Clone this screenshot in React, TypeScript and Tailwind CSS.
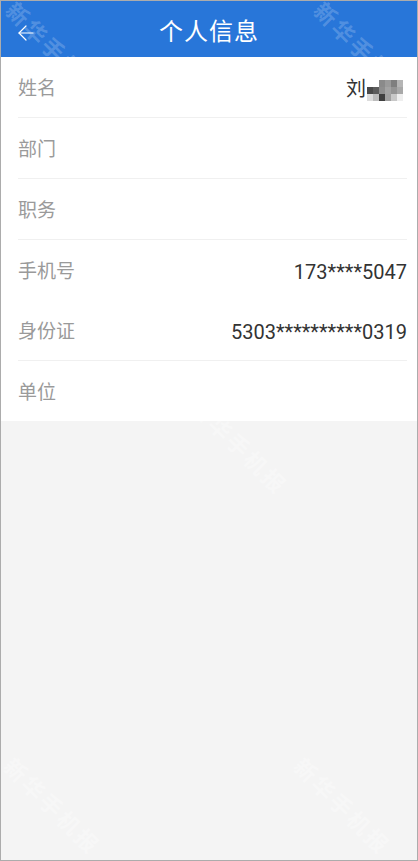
import { ArrowLeft } from 'lucide-react'

const rows = [
  { label: '姓名', value: 'name', divider: true },
  { label: '部门', value: '', divider: true },
  { label: '职务', value: '', divider: true },
  { label: '手机号', value: '173****5047', divider: false },
  { label: '身份证', value: '5303**********0319', divider: true },
  { label: '单位', value: '', divider: false },
]

// pixelated part of the name
const mosaic = [
  ['', '', '#8a8a8a', '#9a9a9a', '#7f7f7f', '#b5b5b5'],
  ['#4a4a4a', '#5c5c5c', '#8e8e8e', '#a3a3a3', '#949494', '#a8a8a8'],
  ['#dcdcdc', '#bdbdbd', '#3f3f3f', '#a0a0a0', '#c8c8c8', '#eeeeee'],
]

function Mosaic() {
  return (
    <div className="ml-[1px] mr-[4px] grid grid-cols-6 mt-[3px]">
      {mosaic.flat().map((c, i) => (
        <div key={i} className="w-[6px] h-[7px]" style={{ backgroundColor: c || 'transparent' }} />
      ))}
    </div>
  )
}

function Watermark({ className }: { className: string }) {
  return (
    <div
      aria-hidden
      className={`absolute pointer-events-none select-none whitespace-nowrap rotate-45 origin-top-left text-[22px] font-bold tracking-[3px] ${className}`}
    >
      新华手机报
    </div>
  )
}

export default function App() {
  return (
    <div
      className="relative w-[418px] h-[861px] overflow-hidden border border-[#acacac] bg-[#f4f4f4] flex flex-col"
      style={{ fontFamily: 'Roboto, "Noto Sans CJK SC", sans-serif' }}
    >
      <header className="relative h-[56px] shrink-0 bg-[#2876d9] flex items-center justify-center overflow-hidden">
        <Watermark className="left-[20px] top-[-6px] text-white/20" />
        <Watermark className="left-[328px] top-[-6px] text-white/20" />
        <button className="absolute left-[13px] top-[20px] text-white">
          <ArrowLeft size={24} strokeWidth={1.2} />
        </button>
        <h1 className="text-white text-[24px] tracking-[1px] pt-[6px]">个人信息</h1>
      </header>

      <div className="bg-white">
        {rows.map((r) => (
          <div key={r.label} className="pl-[17px] pr-[10px]">
            <div
              className={`flex items-center justify-between pt-[4px] ${r.divider ? 'border-b border-[#f0f0f0] h-[61px]' : 'h-[60px]'}`}
            >
              <span className="text-[19px] text-[#9a9a9a]">{r.label}</span>
              {r.value === 'name' ? (
                <span className="flex items-center text-[20px] text-[#333]">
                  刘
                  <Mosaic />
                </span>
              ) : (
                <span className="text-[20px] text-[#333]">{r.value}</span>
              )}
            </div>
          </div>
        ))}
      </div>

      <div className="relative flex-1">
        <Watermark className="left-[205px] top-[-30px] text-white/30" />
        <Watermark className="left-[18px] top-[330px] text-white/30" />
        <Watermark className="left-[308px] top-[330px] text-white/30" />
      </div>
    </div>
  )
}
